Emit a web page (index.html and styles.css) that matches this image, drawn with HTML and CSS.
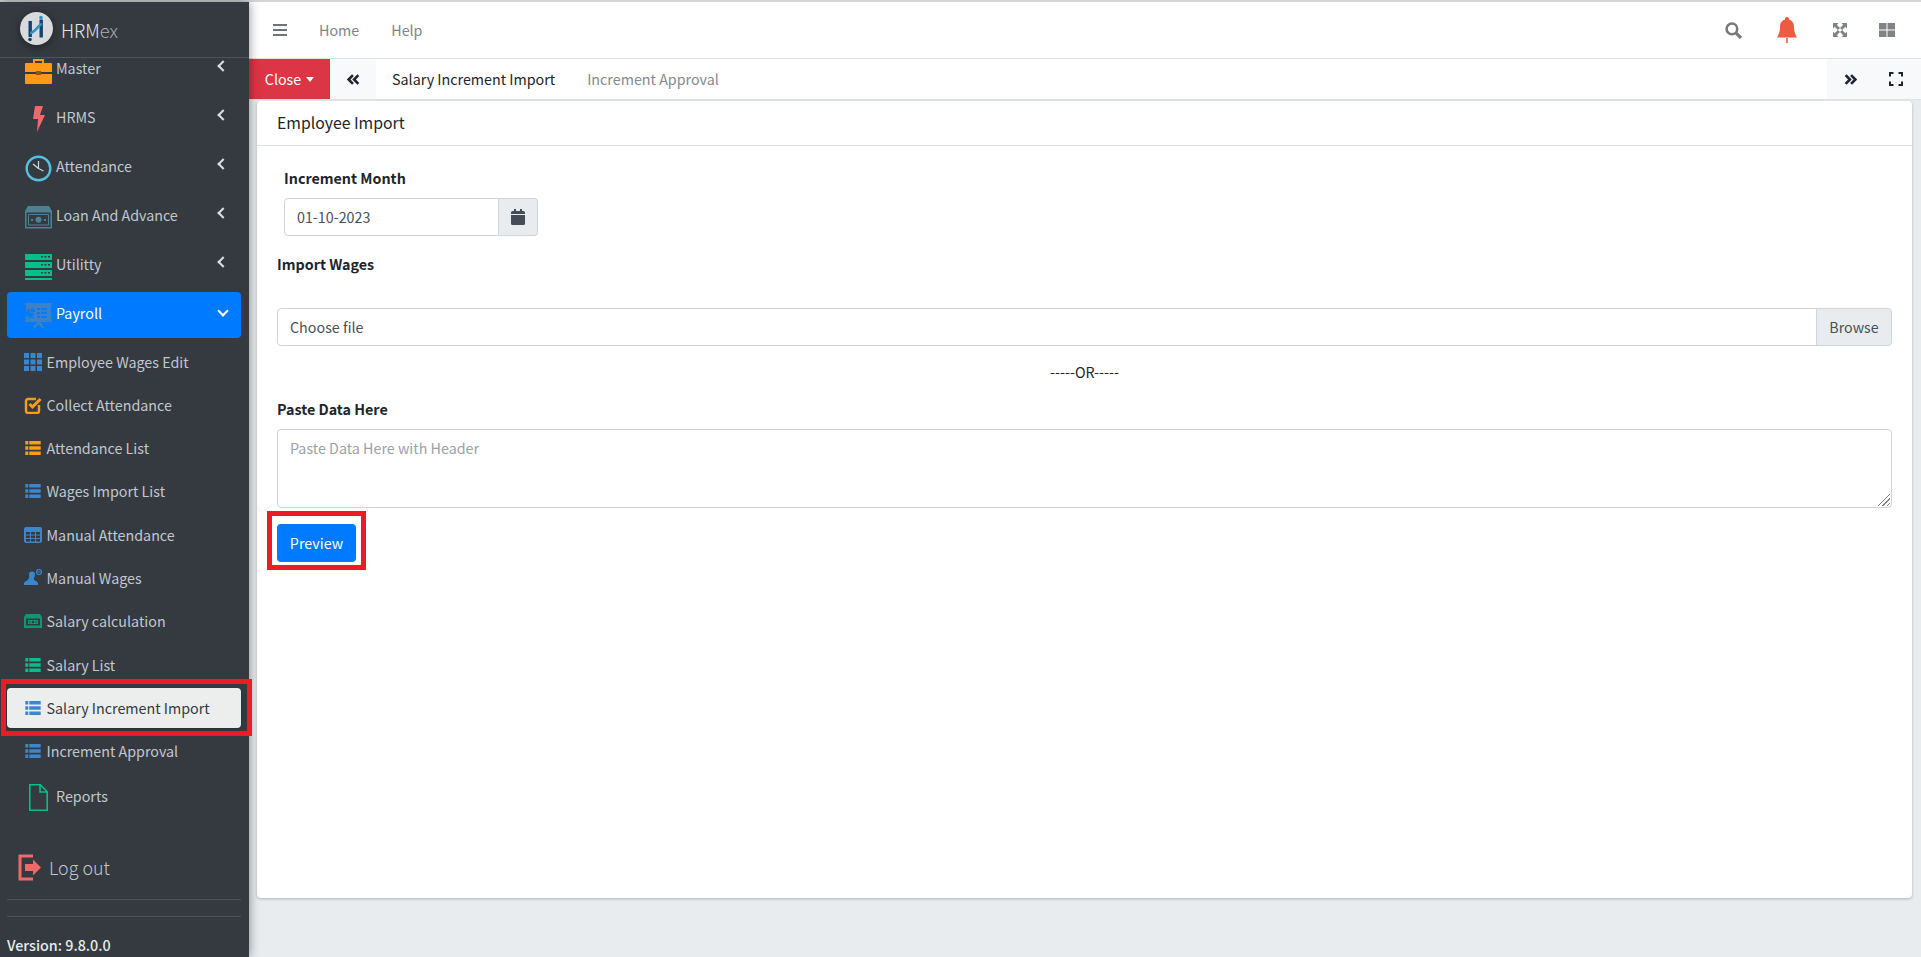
FILE: index.html
```html
<!DOCTYPE html>
<html lang="en">
<head>
<meta charset="utf-8">
<title>Salary Increment Import</title>
<link rel="stylesheet" href="styles.css">
</head>
<body>
<svg class="defs" width="0" height="0" aria-hidden="true">
  <symbol id="i-list" viewBox="0 0 18 18">
    <path fill="currentColor" d="M1.300 2h3v3.600h-3zM1.300 7.200h3v3.600h-3zM1.300 12.400h3V16h-3zM5.300 2h11.400v3.600H5.300zM5.300 7.200h11.400v3.600H5.300zM5.300 12.400h11.400V16H5.300z"/>
  </symbol>
</svg>
<div class="app">
  <aside class="sidebar">
    <div class="brand">
      <svg class="logo" viewBox="0 0 33 33">
        <circle cx="16.500" cy="16.500" r="16.500" fill="#d8dadc"/>
        <path fill="#17406f" d="M8.500 9h3.400v16H8.500zM19.500 7.500h3.400v18h-3.400z"/>
        <path fill="none" stroke="#2a93c9" stroke-width="2.600" d="M10 21c5 0 8-8 12-9"/>
        <circle cx="21" cy="5.500" r="1.800" fill="#2a93c9"/>
        <circle cx="10" cy="27.500" r="1.800" fill="#17406f"/>
      </svg>
      <span class="brand-text">HRM<span class="brand-ex">ex</span></span>
    </div>
    <nav class="nav">
      <ul class="menu">
        <li class="item">
          <svg class="ico" viewBox="0 0 27 27"><path fill="#ff9a12" d="M1 6h25a1 1 0 0 1 1 1v8H0V7a1 1 0 0 1 1-1zM0 17h27v9a1 1 0 0 1-1 1H1a1 1 0 0 1-1-1z"/><path fill="none" stroke="#ff9a12" stroke-width="2" d="M9 6V3h9v3"/><path fill="#8a5a10" d="M11 14h5v4h-5z"/></svg>
          <span class="label">Master</span><span class="chev"></span>
        </li>
        <li class="item">
          <svg class="ico" viewBox="0 0 27 27"><path fill="#f0686a" d="M10 0h8l-3 9h5L12 26l1-13H8z"/></svg>
          <span class="label">HRMS</span><span class="chev"></span>
        </li>
        <li class="item">
          <svg class="ico" viewBox="0 0 27 27"><circle cx="13.500" cy="13.500" r="11.800" fill="none" stroke="#57bfe0" stroke-width="2.400"/><path fill="none" stroke="#d5dbe0" stroke-width="1.200" d="M13.500 6v7.500l5 2.500M13.500 13.500L8 9"/></svg>
          <span class="label">Attendance</span><span class="chev"></span>
        </li>
        <li class="item">
          <svg class="ico" viewBox="0 0 27 27"><path fill="#4c8294" d="M3 2h21l3 5H0z"/><path fill="none" stroke="#4c8294" stroke-width="1.500" d="M.8 7.800h25.400v16H.8z"/><path fill="none" stroke="#4c8294" d="M3.500 10.500h20v10.500h-20z"/><circle cx="13.500" cy="15.800" r="3" fill="#4c8294"/><path fill="#4c8294" d="M6 15h2v2H6zM19 15h2v2h-2z"/></svg>
          <span class="label">Loan And Advance</span><span class="chev"></span>
        </li>
        <li class="item">
          <svg class="ico" viewBox="0 0 27 27"><path fill="#06bd8c" fill-rule="evenodd" d="M0 1h27v6H0zM0 9h27v6H0zM0 17h27v6H0zM0 25h27v2H0zM16 3v1.500h2V3zM19.500 3v1.500h2V3zM23 3v1.500h2V3zM16 11v1.500h2V11zM19.500 11v1.500h2V11zM23 11v1.500h2V11zM16 19v1.500h2V19zM19.500 19v1.500h2V19zM23 19v1.500h2V19z"/></svg>
          <span class="label">Utilitty</span><span class="chev"></span>
        </li>
        <li class="item open">
          <svg class="ico" viewBox="0 0 27 27"><path fill="#3d82c9" fill-rule="evenodd" d="M0 1h27v2h-1v15h1v2H15l4 5-1.500 1.500L13.500 22l-4 4.500L8 25l4-5H0v-2h1V3H0zM5 7a4 4 0 1 0 4 4H5zM6 6v4h4a4 4 0 0 0-4-4zM12 6v2h3V6zM16 6v2h6V6zM12 10v2h3v-2zM16 10v2h6v-2zM12 14v2h3v-2zM16 14v2h6v-2zM4 15v1h5v-1z"/></svg>
          <span class="label">Payroll</span><span class="chev down"></span>
        </li>
      </ul>
      <ul class="submenu">
        <li class="sub">
          <svg class="sico" viewBox="0 0 18 18"><path fill="#3a87d0" d="M0 0h5v5H0zM6.500 0h5v5h-5zM13 0h5v5h-5zM0 6.500h5v5H0zM6.500 6.500h5v5h-5zM13 6.500h5v5h-5zM0 13h5v5H0zM6.500 13h5v5h-5zM13 13h5v5h-5z"/></svg>
          <span class="label">Employee Wages Edit</span>
        </li>
        <li class="sub">
          <svg class="sico" viewBox="0 0 18 18"><path fill="none" stroke="#ff9d14" stroke-width="2.400" d="M15 9v6a2 2 0 0 1-2 2H4a2 2 0 0 1-2-2V5a2 2 0 0 1 2-2h8"/><path fill="none" stroke="#ff9d14" stroke-width="3" d="M5.500 8l3 3L16.500 3"/></svg>
          <span class="label">Collect Attendance</span>
        </li>
        <li class="sub">
          <svg class="sico list-orange"><use href="#i-list"/></svg>
          <span class="label">Attendance List</span>
        </li>
        <li class="sub">
          <svg class="sico list-blue"><use href="#i-list"/></svg>
          <span class="label">Wages Import List</span>
        </li>
        <li class="sub">
          <svg class="sico" viewBox="0 0 18 18"><path fill="#3a87d0" fill-rule="evenodd" d="M2 1h14a2 2 0 0 1 2 2v12a2 2 0 0 1-2 2H2a2 2 0 0 1-2-2V3a2 2 0 0 1 2-2zM2 6v2.500h4V6zM7 6v2.500h4V6zM12 6v2.500h4V6zM2 9.500V12h4V9.500zM7 9.500V12h4V9.500zM12 9.500V12h4V9.500zM2 13v2.500h4V13zM7 13v2.500h4V13zM12 13v2.500h4V13z"/></svg>
          <span class="label">Manual Attendance</span>
        </li>
        <li class="sub">
          <svg class="sico" viewBox="0 0 18 18"><path fill="#3a87d0" d="M5 5.500a3 3 0 0 1 6 0c0 2-1 3-1.200 4.500 0 1.800 3.200 2 4.200 4v2H0v-2c1-2 4-2.200 4.200-4C6 8.500 5 7.500 5 5.500z"/><circle cx="15" cy="3" r="2.500" fill="none" stroke="#3a87d0" stroke-width="1.200"/><path stroke="#3a87d0" d="M13.500 3h3"/></svg>
          <span class="label">Manual Wages</span>
        </li>
        <li class="sub">
          <svg class="sico" viewBox="0 0 18 18"><path fill="#0f9775" fill-rule="evenodd" d="M2 2h14l2 3v11H0V5zM2 6.500v7h14v-7zM4 8h10v4H4z"/><circle cx="9" cy="10" r="1.200" fill="#343a40"/><path fill="#343a40" d="M5 9.500h1.500v1H5zM11.500 9.500H13v1h-1.500z"/></svg>
          <span class="label">Salary calculation</span>
        </li>
        <li class="sub">
          <svg class="sico list-green"><use href="#i-list"/></svg>
          <span class="label">Salary List</span>
        </li>
        <li class="sub active">
          <svg class="sico list-blue"><use href="#i-list"/></svg>
          <span class="label">Salary Increment Import</span>
        </li>
        <li class="sub">
          <svg class="sico list-blue"><use href="#i-list"/></svg>
          <span class="label">Increment Approval</span>
        </li>
      </ul>
      <div class="item reports">
        <svg class="ico" viewBox="0 0 27 27"><path fill="none" stroke="#06bd8c" stroke-width="1.600" d="M4.800.8h10.500l6.900 7v18.400H4.800zM15 1v7h7"/></svg>
        <span class="label">Reports</span>
      </div>
    </nav>
    <div class="logout">
      <svg class="logout-ico" viewBox="0 0 23 27"><path fill="none" stroke="#ee6a68" stroke-width="3" d="M15 2H2v23h13"/><path fill="#ee6a68" d="M7 10h8V5.500l8 8-8 8V17H7z"/></svg>
      <span>Log out</span>
    </div>
    <div class="side-foot">
      <div class="version">Version: 9.8.0.0</div>
    </div>
  </aside>

  <main class="main">
    <header class="topbar">
      <svg class="burger" viewBox="0 0 14 12"><path fill="#6f7479" d="M0 0h14v2H0zM0 5h14v2H0zM0 10h14v2H0z"/></svg>
      <a class="toplink">Home</a>
      <a class="toplink">Help</a>
      <div class="top-icons">
        <svg class="t-search" viewBox="0 0 16 16"><circle cx="6.500" cy="6.500" r="5" fill="none" stroke="#77797c" stroke-width="2.400"/><path stroke="#77797c" stroke-width="3" d="M10.500 10.500l4.500 4.500"/></svg>
        <svg class="t-bell" viewBox="0 0 20 26"><path fill="#ef5a40" d="M10 0a2 2 0 0 1 2 2.500c3.500 1 5 3.500 5 7.500 0 5 1.500 8 3 10.500H0C1.500 18 3 15 3 10 3 6 4.500 3.500 8 2.500A2 2 0 0 1 10 0zM9.200 21h1.600v5H9.200z"/></svg>
        <svg class="t-expand" viewBox="0 0 14 14"><path fill="#808285" d="M0 0h5.500L3.800 1.700 7 4.900 4.900 7 1.700 3.800 0 5.500zM14 0v5.500l-1.700-1.700L9.100 7 7 4.900l3.200-3.200L8.500 0zM0 14V8.500l1.700 1.700L4.900 7 7 9.100l-3.200 3.200L5.500 14zM14 14H8.500l1.700-1.700L7 9.100 9.100 7l3.200 3.200L14 8.500z"/></svg>
        <svg class="t-grid" viewBox="0 0 16 14"><path fill="#808285" d="M0 0h7.500v6.500H0zM8.500 0H16v6.500H8.500zM0 7.500h7.500V14H0zM8.500 7.500H16V14H8.500z"/></svg>
      </div>
    </header>

    <div class="tabbar">
      <button class="close-btn">Close<span class="caret"></span></button>
      <div class="tab-scroll">
        <svg class="dbl" viewBox="0 0 12 10"><path fill="none" stroke="#1d2530" stroke-width="2.400" d="M5.500 1L1.500 5l4 4M10.500 1l-4 4 4 4"/></svg>
      </div>
      <div class="tab current">Salary Increment Import</div>
      <div class="tab">Increment Approval</div>
      <div class="tab-right">
        <svg class="dbl" viewBox="0 0 12 10"><path fill="none" stroke="#1d2530" stroke-width="2.400" d="M1.500 1l4 4-4 4M6.500 1l4 4-4 4"/></svg>
        <svg class="fs" viewBox="0 0 14 14"><path fill="none" stroke="#1d2530" stroke-width="2" d="M1 4.500V1h3.500M9.500 1H13v3.500M13 9.500V13H9.500M4.500 13H1V9.500"/></svg>
      </div>
    </div>

    <section class="card">
      <div class="card-head">Employee Import</div>
      <div class="card-body">
        <div class="month-group">
          <label class="field-label">Increment Month</label>
          <div class="date-group">
            <div class="date-input">01-10-2023</div>
            <div class="date-addon">
              <svg class="cal" viewBox="0 0 14 16"><path fill="#454c55" d="M3 0h2v2h4V0h2v2h1.500A1.500 1.500 0 0 1 14 3.500V5H0V3.500A1.500 1.500 0 0 1 1.500 2H3zM0 6h14v8.500a1.500 1.500 0 0 1-1.500 1.500h-11A1.500 1.500 0 0 1 0 14.500z"/></svg>
            </div>
          </div>
        </div>
        <label class="field-label wages-label">Import Wages</label>
        <div class="file-group">
          <div class="file-text">Choose file</div>
          <div class="file-btn">Browse</div>
        </div>
        <div class="or">-----OR-----</div>
        <label class="field-label paste-label">Paste Data Here</label>
        <textarea class="paste" placeholder="Paste Data Here with Header"></textarea>
        <button class="preview">Preview</button>
      </div>
    </section>
  </main>
</div>
</body>
</html>
```

FILE: styles.css
```css
* { box-sizing: border-box; }
html, body { height: 100%; }
body {
  margin: 0;
  overflow: hidden;
  background: #e9ecef;
  color: #212529;
  font-family: "Noto Sans CJK SC", "Source Sans Pro", "Noto Sans", sans-serif;
  font-size: 14.3px;
  line-height: 24px;
}
.defs { position: absolute; }
ul { list-style: none; margin: 0; padding: 0; }

.app { display: flex; height: 957px; border-top: 2px solid #d4d5d6; }
.sidebar {
  width: 249px;
  flex: none;
  display: flex;
  flex-direction: column;
  background: #343a40;
  color: #c2c7d0;
  box-shadow: 0 0 10px rgba(0,0,0,.45);
  position: relative;
  z-index: 2;
}
.brand {
  height: 56px;
  flex: none;
  display: flex;
  align-items: center;
  padding-left: 20px;
  border-bottom: 1px solid #4b545c;
  background: #343a40;
  position: relative;
  z-index: 1;
}
.logo { width: 33px; height: 33px; margin-top: -3px; filter: drop-shadow(0 2px 4px rgba(0,0,0,.4)); }
.brand-text { margin-left: 8px; font-size: 18.4px; font-weight: 300; color: #e4e7ea; }
.brand-ex { color: #a7acb2; }

.nav { flex: none; height: 770px; padding: 0 8px 0 7px; }
.menu { margin-top: -11px; }
.item {
  height: 46px;
  margin-bottom: 3.1px;
  display: flex;
  align-items: center;
  padding: 0 14px 0 18px;
  border-radius: 4px;
}
.ico { width: 27px; height: 27px; flex: none; margin-right: 4px; }
.item .label { flex: 1; white-space: nowrap; margin-top: -4px; }
.item.open { background: #007bff; color: #fff; }
.chev {
  width: 8px; height: 8px; flex: none;
  border-left: 2.500px solid #dde0e3;
  border-bottom: 2.500px solid #dde0e3;
  transform: rotate(45deg);
  margin-top: -8px;
}
.chev.down { border-color: #fff; transform: rotate(-45deg); }
.submenu { margin-top: 1px; }
.sub {
  height: 40px;
  margin-bottom: 3.3px;
  display: flex;
  align-items: center;
  padding-left: 17px;
  border-radius: 4px;
  white-space: nowrap;
  position: relative;
}
.sico { width: 18px; height: 18px; flex: none; margin-right: 4.500px; }
.list-orange { color: #ff9d14; }
.list-blue { color: #3a87d0; }
.list-green { color: #06bd8c; }
.sub.active { background: #eceeee; color: #343a40; box-shadow: 0 1px 3px rgba(0,0,0,.2); }
.sub.active::after {
  content: "";
  position: absolute;
  top: -9px; bottom: -8px; left: -6px; right: -11px;
  border: 5px solid #ed1c24;
}
.reports { margin-top: 1px; }

.logout {
  flex: none;
  margin-top: 19px;
  height: 40px;
  display: flex;
  align-items: center;
  padding-left: 18px;
  font-size: 17.9px;
  font-weight: 300;
  color: #c2c7d0;
}
.logout-ico { width: 23px; height: 27px; margin-right: 8px; }
.side-foot { flex: none; margin: 12px 8px 0 7px; padding-top: 16px; border-top: 1px solid #4b545c; }
.version { border-top: 1px solid #4b545c; padding-top: 16px; color: #e8eaec; font-size: 14.3px; font-weight: 500; white-space: nowrap; }

.main { flex: 1; min-width: 0; display: flex; flex-direction: column; }
.topbar {
  height: 57px;
  flex: none;
  display: flex;
  align-items: center;
  background: #fff;
  border-bottom: 1px solid #dee2e6;
  padding: 0 26px 0 24px;
}
.burger { width: 14px; height: 12px; margin-right: 32px; }
.toplink { color: #7f8489; margin-right: 32px; }
.top-icons { margin-left: auto; display: flex; align-items: center; }
.t-search { width: 17px; height: 17px; margin-right: 35px; }
.t-bell { width: 20px; height: 26px; margin-right: 36px; }
.t-expand { width: 14px; height: 14px; margin-right: 32px; }
.t-grid { width: 16px; height: 14px; }

.tabbar {
  height: 41px;
  flex: none;
  display: flex;
  align-items: center;
  background: #fff;
  border-bottom: 1px solid #dee2e6;
}
.close-btn {
  height: 40px;
  width: 81px;
  flex: none;
  border: 0;
  margin: 0;
  background: #dc3545;
  color: #fff;
  font: inherit;
  display: flex;
  align-items: center;
  justify-content: center;
}
.caret {
  margin-left: 5px;
  border-top: 5px solid #fff;
  border-left: 4px solid transparent;
  border-right: 4px solid transparent;
}
.tab-scroll {
  width: 46px;
  height: 40px;
  flex: none;
  background: #f8f9fa;
  display: flex;
  align-items: center;
  justify-content: center;
}
.dbl { width: 13px; height: 11px; }
.tab { padding: 0 16px; color: #84898e; white-space: nowrap; }
.tab.current { color: #212529; }
.tab-right {
  margin-left: auto;
  width: 94px;
  height: 40px;
  background: #f8f9fa;
  display: flex;
  align-items: center;
  padding-left: 17px;
  gap: 32px;
}
.fs { width: 14px; height: 14px; }

.card {
  flex: none;
  height: 797px;
  margin: 1px 9px 0 8px;
  background: #fff;
  border-radius: 4px;
  box-shadow: 0 1px 3px rgba(0,0,0,.25);
}
.card-head {
  height: 45px;
  padding: 0 20px;
  display: flex;
  align-items: center;
  border-bottom: 1px solid #dee2e6;
  font-size: 15.8px;
}
.card-body { padding: 20px 20px 0; }
.field-label { display: block; font-weight: 700; }
.month-group { padding-left: 7px; }
.month-group .field-label { margin-bottom: 8px; }
.date-group { display: flex; width: 254px; height: 38px; }
.date-input {
  flex: 1;
  border: 1px solid #ced4da;
  border-radius: 4px 0 0 4px;
  padding: 0 12px;
  display: flex;
  align-items: center;
  color: #495057;
}
.date-addon {
  width: 39px;
  background: #e9ecef;
  border: 1px solid #ced4da;
  border-left: 0;
  border-radius: 0 4px 4px 0;
  display: flex;
  align-items: center;
  justify-content: center;
}
.cal { width: 14px; height: 16px; }
.wages-label { margin-top: 16px; }
.file-group { display: flex; height: 38px; margin-top: 32px; }
.file-text {
  flex: 1;
  border: 1px solid #ced4da;
  border-radius: 4px 0 0 4px;
  padding: 0 12px;
  display: flex;
  align-items: center;
  color: #495057;
}
.file-btn {
  width: 76px;
  background: #e9ecef;
  border: 1px solid #ced4da;
  margin-left: -1px;
  border-radius: 0 4px 4px 0;
  display: flex;
  align-items: center;
  justify-content: center;
  color: #495057;
}
.or { text-align: center; margin-top: 14px; }
.paste-label { margin-top: 13px; }
.paste {
  display: block;
  width: 100%;
  height: 79px;
  margin: 8px 0 0;
  border: 1px solid #ced4da;
  border-radius: 4px;
  padding: 6px 12px;
  font: inherit;
  color: #495057;
  resize: none;
  outline: 0;
  background:
    linear-gradient(135deg, #fff 50%, transparent 50%) right 1px bottom 1px / 14px 14px no-repeat,
    repeating-linear-gradient(135deg, transparent 0 2px, #808080 2px 3px) right 1px bottom 1px / 14px 14px no-repeat,
    #fff;
}
.paste::placeholder { color: #9aa1a8; opacity: 1; }
.preview {
  display: block;
  position: relative;
  width: 79px;
  height: 38px;
  margin-top: 16px;
  border: 0;
  border-radius: 4px;
  background: #007bff;
  color: #fff;
  font: inherit;
  padding: 0;
}
.preview::after {
  content: "";
  position: absolute;
  top: -13px; bottom: -8px; left: -10px; right: -10px;
  border: 5px solid #ed1c24;
}
```
